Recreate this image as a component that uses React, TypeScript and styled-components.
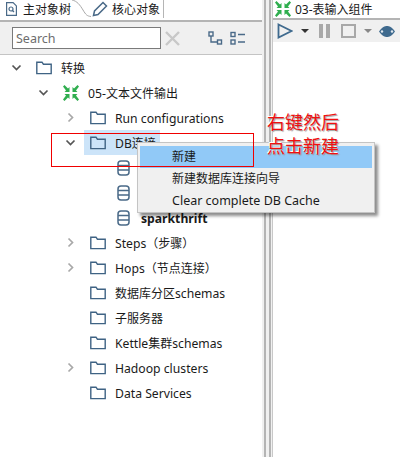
import { createGlobalStyle } from 'styled-components'
import styled from 'styled-components'

const GlobalStyle = createGlobalStyle`
  html, body {
    margin: 0;
    padding: 0;
    background: #f0f0f0;
  }
  body {
    font-family: "Noto Sans", "Noto Sans CJK SC", sans-serif;
    font-size: 12.5px;
    color: #1a1a1a;
  }
`

const Page = styled.div`
  position: relative;
  display: flex;
  width: 400px;
  height: 457px;
  overflow: hidden;
`

const LeftPanel = styled.div`
  width: 262px;
  display: flex;
  flex-direction: column;
  background: #fff;
`

const TabStrip = styled.div`
  height: 20px;
  display: flex;
  background: #fff;
  border-bottom: 2px solid #b4b4b4;
`

const Tab = styled.div<{ $active?: boolean }>`
  height: 18px;
  width: ${({ $active }) => ($active ? '72px' : '73px')};
  display: flex;
  align-items: center;
  gap: ${({ $active }) => ($active ? '6px' : '4px')};
  padding-left: ${({ $active }) => ($active ? '6px' : '1px')};
  box-sizing: border-box;
  border-right: ${({ $active }) => ($active ? 'none' : '1px solid #b5b5b5')};
  font-size: 12px;
`

const TabCurve = styled.svg`
  flex: none;
`

const SearchBar = styled.div`
  height: 32px;
  display: flex;
  align-items: center;
  padding-left: 12px;
  background: #f0f0f0;
  border-bottom: 1px solid #c4c4c4;
`

const SearchInput = styled.div`
  width: 144px;
  height: 20px;
  display: flex;
  align-items: center;
  padding-left: 3px;
  background: #fff;
  border: 1px solid #7a7a7a;
  color: #6d6d6d;
  font-size: 12.5px;
`

const ClearIcon = styled.svg`
  margin-left: 4px;
`

const BarIcon = styled.svg<{ $gap?: number }>`
  margin-left: ${({ $gap }) => $gap ?? 0}px;
`

const Tree = styled.div`
  flex: 1;
  background: #fff;
`

const Row = styled.div<{ $level: number }>`
  height: 25px;
  display: flex;
  align-items: center;
  padding-left: ${({ $level }) => 11 + $level * 27}px;
`

const Toggle = styled.svg`
  width: 11px;
  height: 11px;
  margin-right: 14px;
  flex: none;
`

const Label = styled.span<{ $bold?: boolean }>`
  margin-left: 9px;
  padding-top: 1px;
  white-space: nowrap;
  font-size: 12.2px;
  font-weight: ${({ $bold }) => ($bold ? 700 : 400)};
`

const Cjk = styled.span`
  font-size: 12px;
`

const Selected = styled.div`
  display: flex;
  align-items: center;
  height: 25px;
  width: 76px;
  box-sizing: border-box;
  margin-left: -6px;
  padding-left: 6px;
  background: #cce4f9;
  flex: none;
`

const Blank = styled.span`
  width: 25px;
  flex: none;
`

const Sash = styled.div`
  width: 10px;
  display: flex;
  justify-content: center;
  gap: 3px;
  background: #f0f0f0;
`

const SashLine = styled.div`
  width: 2px;
  background: #b4b4b4;
`

const RightPanel = styled.div`
  flex: 1;
  display: flex;
  flex-direction: column;
  background: #fff;
  border-left: 1px solid #c8c8c8;
`

const RightTab = styled.div`
  height: 18px;
  display: flex;
  align-items: center;
  gap: 4px;
  padding-left: 2px;
  font-size: 12px;
  border-bottom: 2px solid #b4b4b4;
  overflow: hidden;
`

const RunBar = styled.div`
  height: 22px;
  display: flex;
  align-items: center;
  padding-left: 4px;
  background: #f0f0f0;
`

const Canvas = styled.div`
  flex: 1;
  background: #fff;
`

const ContextMenu = styled.div`
  position: absolute;
  left: 137px;
  top: 142px;
  width: 238px;
  height: 71px;
  padding: 3px 2px 0;
  box-sizing: border-box;
  background: #f0f0f0;
  border: 1px solid #c4c4c4;
  box-shadow: 3px 3px 3px rgba(0, 0, 0, 0.45);
`

const MenuItem = styled.div<{ $active?: boolean; $cjk?: boolean }>`
  height: 22px;
  box-sizing: border-box;
  display: flex;
  align-items: center;
  padding-left: 32px;
  padding-bottom: 2px;
  font-size: ${({ $cjk }) => ($cjk ? '12px' : '12.5px')};
  background: ${({ $active }) => ($active ? '#91c9f7' : 'transparent')};
`

const RedBox = styled.div`
  position: absolute;
  left: 51px;
  top: 133px;
  width: 201px;
  height: 32px;
  border: 1px solid #f00000;
`

const Note = styled.div`
  position: absolute;
  left: 267px;
  top: 110px;
  color: #f01010;
  font-size: 18px;
  line-height: 24px;
  text-shadow: 1px 1px 1px #999, -1px -1px 0 #fff;
`

const Folder = () => (
  <svg width="16" height="14" viewBox="0 0 16 14" fill="none" stroke="#3f6384" strokeWidth="1.4" style={{ flex: 'none' }}>
    <path d="M.8 12.6V1.2h5.2l1.4 2h7.800v9.400z" />
  </svg>
)

const Arrows = () => (
  <svg width="16" height="16" viewBox="0 0 16 16" fill="#2fae4e" style={{ flex: 'none' }}>
    <path d="M0 1.500 1.500 0 5 3.500 6.500 2v5H1.500L3 5.500zM16 1.500 14.500 0 11 3.500 9.500 2v5h5L13 5.500zM0 14.500 1.500 16 5 12.500 6.500 14V9H1.500L3 10.500zM16 14.500 14.500 16 11 12.500 9.500 14V9h5L13 10.500z" />
  </svg>
)

const Db = () => (
  <svg width="15" height="16" viewBox="0 0 15 16" fill="none" stroke="#4a6a88" strokeWidth="1.5" style={{ flex: 'none' }}>
    <rect x="1" y="1" width="11" height="14" rx="3" />
    <path d="M1 5.500h11M1 10h11" />
  </svg>
)

const Open = () => (
  <Toggle viewBox="0 0 11 11" fill="none" stroke="#555" strokeWidth="1.7">
    <path d="M1.500 3.500 5.500 7.500 9.500 3.500" />
  </Toggle>
)

const Closed = () => (
  <Toggle viewBox="0 0 11 11" fill="none" stroke="#a8a8a8" strokeWidth="1.7">
    <path d="M3.500 1.500 7.500 5.500 3.500 9.500" />
  </Toggle>
)

const folders: { name: React.ReactNode; key: string; toggle: boolean }[] = [
  { key: 'steps', name: <>Steps<Cjk>（步骤）</Cjk></>, toggle: true },
  { key: 'hops', name: <>Hops<Cjk>（节点连接）</Cjk></>, toggle: true },
  { key: 'partition', name: <><Cjk>数据库分区</Cjk>schemas</>, toggle: false },
  { key: 'slave', name: <Cjk>子服务器</Cjk>, toggle: false },
  { key: 'cluster', name: <>Kettle<Cjk>集群</Cjk>schemas</>, toggle: false },
  { key: 'hadoop', name: 'Hadoop clusters', toggle: true },
  { key: 'services', name: 'Data Services', toggle: false },
]

const App = () => {
  return (
    <Page>
      <GlobalStyle />
      <LeftPanel>
        <TabStrip>
          <Tab $active>
            <svg width="11" height="14" viewBox="0 0 11 14" fill="none" stroke="#4a6a88" strokeWidth="1.2">
              <path d="M.6.6h6.500l3.300 3.300v9.500H.6z" />
              <circle cx="5" cy="7" r="2" />
              <path d="M6.500 8.500 8 10" />
            </svg>
            主对象树
          </Tab>
          <TabCurve width="19" height="18" viewBox="0 0 19 18" fill="none" stroke="#a8a8a8" strokeWidth="1">
            <path d="M0 0C5 1 8 5 11 10S15 16 19 16.500" />
          </TabCurve>
          <Tab>
            <svg width="16" height="16" viewBox="0 0 16 16" fill="none" stroke="#4a6a88" strokeWidth="1.500">
              <path d="M1.500 14.500 2.500 10 11 1.500 14.500 5 6 13.500z" />
            </svg>
            核心对象
          </Tab>
        </TabStrip>
        <SearchBar>
          <SearchInput>Search</SearchInput>
          <ClearIcon width="15" height="15" viewBox="0 0 15 15" stroke="#c8c8c8" strokeWidth="2.400">
            <path d="M1 1 14 14M14 1 1 14" />
          </ClearIcon>
          <BarIcon $gap={28} width="15" height="15" viewBox="0 0 15 15" fill="none" stroke="#4a6a88" strokeWidth="1.400">
            <rect x="1" y="1" width="4" height="4" />
            <rect x="9.500" y="9" width="4" height="4" />
            <path d="M3 5v6h6.500" />
          </BarIcon>
          <BarIcon $gap={7} width="16" height="15" viewBox="0 0 16 15" fill="none" stroke="#4a6a88" strokeWidth="1.400">
            <rect x="1" y="1.500" width="4" height="4" />
            <rect x="1" y="9" width="4" height="4" />
            <path d="M8 3.500h7M8 11h7" />
          </BarIcon>
        </SearchBar>
        <Tree>
          <Row $level={0}>
            <Open />
            <Folder />
            <Label><Cjk>转换</Cjk></Label>
          </Row>
          <Row $level={1}>
            <Open />
            <Arrows />
            <Label>05-<Cjk>文本文件输出</Cjk></Label>
          </Row>
          <Row $level={2}>
            <Closed />
            <Folder />
            <Label>Run configurations</Label>
          </Row>
          <Row $level={2}>
            <Open />
            <Selected>
              <Folder />
              <Label>DB<Cjk>连接</Cjk></Label>
            </Selected>
          </Row>
          <Row $level={3}>
            <Blank />
            <Db />
          </Row>
          <Row $level={3}>
            <Blank />
            <Db />
          </Row>
          <Row $level={3}>
            <Blank />
            <Db />
            <Label $bold>sparkthrift</Label>
          </Row>
          {folders.map((folder) => (
            <Row $level={2} key={folder.key}>
              {folder.toggle ? <Closed /> : <Blank />}
              <Folder />
              <Label>{folder.name}</Label>
            </Row>
          ))}
        </Tree>
      </LeftPanel>
      <Sash>
        <SashLine />
        <SashLine />
      </Sash>
      <RightPanel>
        <RightTab>
          <Arrows />
          03-表输入组件
        </RightTab>
        <RunBar>
          <svg width="16" height="16" viewBox="0 0 16 16" fill="none" stroke="#3f6a8e" strokeWidth="1.800">
            <path d="M1.500 1.500 14.500 8 1.500 14.500z" />
          </svg>
          <BarIcon $gap={8} width="8" height="4" viewBox="0 0 8 4" fill="#333">
            <path d="M0 0h8L4 4z" />
          </BarIcon>
          <BarIcon $gap={10} width="11" height="14" viewBox="0 0 11 14" fill="#a8a8a8">
            <path d="M0 0h4v14H0zM7 0h4v14H7z" />
          </BarIcon>
          <BarIcon $gap={11} width="15" height="14" viewBox="0 0 15 14" fill="none" stroke="#a8a8a8" strokeWidth="2">
            <rect x="1" y="1" width="13" height="12" />
          </BarIcon>
          <BarIcon $gap={8} width="8" height="4" viewBox="0 0 8 4" fill="#888">
            <path d="M0 0h8L4 4z" />
          </BarIcon>
          <BarIcon $gap={7} width="16" height="11" viewBox="0 0 16 11">
            <path fill="#3f6a8e" d="M0 5.500C3 1 6 0 8 0s5 1 8 5.500C13 10 10 11 8 11s-5-1-8-5.500z" />
            <circle cx="3" cy="5.500" r="1.200" fill="#dfe7ee" />
            <circle cx="13" cy="5.500" r="1.200" fill="#dfe7ee" />
          </BarIcon>
        </RunBar>
        <Canvas />
      </RightPanel>
      <ContextMenu>
        <MenuItem $active $cjk>新建</MenuItem>
        <MenuItem $cjk>新建数据库连接向导</MenuItem>
        <MenuItem>Clear complete DB Cache</MenuItem>
      </ContextMenu>
      <RedBox />
      <Note>
        右键然后
        <br />
        点击新建
      </Note>
    </Page>
  )
}

export default App
